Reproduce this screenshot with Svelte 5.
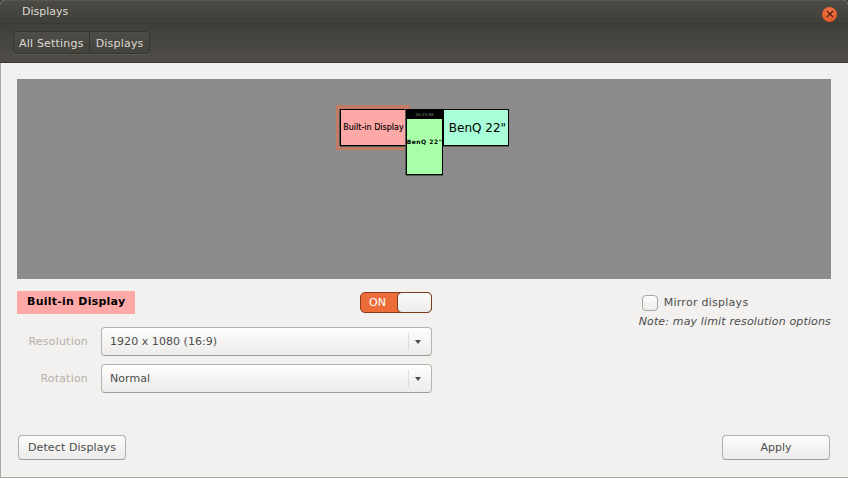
<script>
	const displays = [
		{ id: 'builtin', name: 'Built-in Display', cls: 'builtin' },
		{ id: 'phone', name: 'BenQ 22"', cls: 'portrait' },
		{ id: 'benq', name: 'BenQ 22"', cls: 'benq' }
	];
	let mirror = $state(false);
	let on = $state(true);
</script>

<div class="window">
	<header class="titlebar">
		<span class="title">Displays</span>
		<button class="close" aria-label="Close">
			<svg viewBox="0 0 8 8" width="8" height="8"><path d="M1 1l6 6M7 1l-6 6" stroke="#4a2012" stroke-width="1.3" fill="none" /></svg>
		</button>
	</header>
	<div class="toolbar">
		<div class="crumbs">
			<button>All Settings</button>
			<button>Displays</button>
		</div>
	</div>

	<main class="content">
		<section class="preview">
			<div class="selection"></div>
			{#each displays as d (d.id)}
				<div class="monitor {d.cls}">
					{#if d.cls === 'portrait'}
						<div class="panel">00:23:58</div>
					{/if}
					<span class="label">{d.name}</span>
				</div>
			{/each}
		</section>

		<section class="settings">
			<div class="left">
				<div class="head">
					<div class="badge">Built-in Display</div>
					<button class="switch" class:on onclick={() => (on = !on)}>
						<span class="on-text">ON</span>
						<span class="knob"></span>
					</button>
				</div>
				<div class="row">
					<span class="lbl">Resolution</span>
					<div class="combo"><span class="val">1920 x 1080 (16:9)</span><span class="arrow"></span></div>
				</div>
				<div class="row">
					<span class="lbl">Rotation</span>
					<div class="combo"><span class="val">Normal</span><span class="arrow"></span></div>
				</div>
			</div>
			<div class="right">
				<label class="mirror">
					<input type="checkbox" bind:checked={mirror} />
					<span>Mirror displays</span>
				</label>
				<em class="note">Note: may limit resolution options</em>
			</div>
		</section>

		<footer class="actions">
			<button class="btn detect">Detect Displays</button>
			<button class="btn apply">Apply</button>
		</footer>
	</main>
</div>

<style>
	:global(body) {
		margin: 0;
		background: #3c3b37;
	}
	button {
		font: inherit;
		padding: 0;
		cursor: default;
	}
	.window {
		width: 848px;
		height: 478px;
		box-sizing: border-box;
		display: flex;
		flex-direction: column;
		font-family: 'DejaVu Sans', sans-serif;
		font-size: 11px;
		color: #4c4c4c;
		overflow: hidden;
		background: #f2f1ef;
		border-radius: 5px 5px 0 0;
	}
	.titlebar {
		height: 24px;
		flex: none;
		display: flex;
		align-items: center;
		justify-content: space-between;
		padding: 0 11px 2px 22px;
		background: linear-gradient(#4b4a45, #3f3e39);
		border-top: 1px solid #57564f;
		border-bottom: 1px solid #393833;
		box-sizing: border-box;
		color: #dfdbd2;
	}
	.close {
		width: 15px;
		height: 15px;
		margin: 3px 0 -3px;
		border-radius: 50%;
		border: none;
		display: grid;
		place-items: center;
		background: radial-gradient(circle at 50% 35%, #f2794a, #dc4d1e);
	}
	.toolbar {
		height: 39px;
		flex: none;
		box-sizing: border-box;
		padding: 7px 0 0 13px;
		background: linear-gradient(#3f3e39, #4f4d46);
		border-bottom: 1px solid #3a3935;
	}
	.crumbs {
		display: inline-flex;
		height: 23px;
		box-sizing: border-box;
		border: 1px solid #35342f;
		border-radius: 4px;
		background: linear-gradient(#4d4c46, #44433e);
		box-shadow: 0 1px 0 #5c5a53;
		letter-spacing: 0.2px;
	}
	.crumbs button {
		background: none;
		border: none;
		color: #dfdbd2;
		padding: 1px 5px 0;
		letter-spacing: inherit;
	}
	.crumbs button + button {
		border-left: 1px solid #35342f;
		padding: 1px 5px 0 6px;
	}
	.content {
		flex: 1;
		display: flex;
		flex-direction: column;
		padding: 16px 17px 17px;
		border-left: 1px solid #a9a8a4;
		border-bottom: 1px solid #a9a8a4;
		box-sizing: border-box;
		min-height: 0;
	}
	.preview {
		position: relative;
		height: 200px;
		margin-left: -1px;
		background: #8b8b8b;
		flex: none;
	}
	.selection {
		position: absolute;
		left: 319px;
		top: 26px;
		width: 74px;
		height: 45px;
		background: #c27b66;
	}
	.monitor {
		position: absolute;
		box-sizing: border-box;
		border: 1px solid #000;
		color: #000;
		display: flex;
		align-items: center;
		justify-content: center;
		box-shadow: 0 1px 0 #4f5f4f, -1px 0 0 #4f5f4f;
	}
	.builtin {
		left: 323px;
		top: 30px;
		width: 67px;
		height: 37px;
		background: #ffa8a8;
		font-size: 8px;
		-webkit-text-stroke: 0.15px #000;
		white-space: nowrap;
	}
	.portrait {
		left: 389px;
		top: 30px;
		width: 37px;
		height: 66px;
		background: #a8ffa8;
		flex-direction: column;
		font-size: 6px;
		font-weight: bold;
		letter-spacing: 0.5px;
		white-space: nowrap;
		z-index: 1;
	}
	.portrait .panel {
		align-self: stretch;
		height: 9px;
		flex: none;
		background: #000;
		color: #888;
		font-size: 4px;
		font-weight: normal;
		letter-spacing: 0;
		line-height: 9px;
		text-align: center;
	}
	.portrait .label {
		flex: 1;
		display: flex;
		align-items: center;
		margin-bottom: 10px;
	}
	.benq {
		left: 426px;
		top: 30px;
		width: 66px;
		height: 37px;
		padding-left: 3px;
		background: #a8ffd8;
		font-size: 12px;
		white-space: nowrap;
	}
	.settings {
		display: flex;
		justify-content: space-between;
		margin: 12px 0 0 -1px;
	}
	.left {
		width: 415px;
		display: flex;
		flex-direction: column;
	}
	.head {
		display: flex;
		justify-content: space-between;
		align-items: center;
		height: 23px;
		margin-bottom: 13px;
	}
	.badge {
		background: #ffa8a8;
		color: #000;
		font-weight: bold;
		letter-spacing: 0.25px;
		width: 118px;
		height: 23px;
		line-height: 22px;
		box-sizing: border-box;
		padding-left: 10px;
	}
	.switch {
		width: 72px;
		height: 21px;
		box-sizing: border-box;
		position: relative;
		border: 1px solid #8b3a1c;
		border-radius: 5px;
		background: #ec6d3a;
		color: #fff;
		font-size: 11px;
		text-align: left;
		padding-left: 8px;
	}
	.knob {
		position: absolute;
		right: -1px;
		top: -1px;
		width: 35px;
		height: 21px;
		box-sizing: border-box;
		border: 1px solid #7a3a22;
		border-radius: 5px;
		background: linear-gradient(#fbfbfa, #ecebe9);
	}
	.row {
		display: flex;
		align-items: center;
		margin-bottom: 8px;
	}
	.lbl {
		width: 71px;
		text-align: right;
		margin-right: 13px;
		color: #b5b0a8;
		letter-spacing: 0.2px;
	}
	.combo {
		flex: 1;
		height: 29px;
		box-sizing: border-box;
		display: flex;
		align-items: center;
		justify-content: space-between;
		border: 1px solid #b4b3af;
		border-bottom-color: #9c9b97;
		border-radius: 4px;
		background: linear-gradient(#fdfdfc, #edecea);
		padding-left: 8px;
		letter-spacing: 0.05px;
	}
	.arrow {
		width: 22px;
		height: 17px;
		border-left: 1px solid #dddcda;
		position: relative;
	}
	.arrow::after {
		content: '';
		position: absolute;
		left: 6px;
		top: 7px;
		border: 3px solid transparent;
		border-top: 4px solid #4c4c4c;
		border-bottom: 0;
	}
	.right {
		display: flex;
		flex-direction: column;
		align-items: flex-end;
		padding-top: 2px;
	}
	.mirror {
		display: flex;
		align-items: center;
		gap: 6px;
		align-self: flex-start;
		margin-left: 3px;
		height: 18px;
		letter-spacing: 0.27px;
	}
	.mirror input {
		appearance: none;
		margin: 1px 0 -1px;
		width: 16px;
		height: 16px;
		box-sizing: border-box;
		border: 1px solid #a8a7a3;
		border-radius: 4px;
		background: linear-gradient(#fbfbfa, #efeeec);
	}
	.note {
		margin-top: 4px;
		white-space: nowrap;
		letter-spacing: 0.15px;
	}
	.actions {
		margin-top: auto;
		display: flex;
		justify-content: space-between;
	}
	.btn {
		height: 25px;
		box-sizing: border-box;
		border: 1px solid #b0afab;
		border-bottom-color: #9c9b97;
		border-radius: 4px;
		background: linear-gradient(#fcfcfb, #ecebe9);
		color: #4c4c4c;
	}
	.detect {
		width: 108px;
		letter-spacing: 0.1px;
	}
	.apply {
		width: 108px;
		margin-right: 1px;
	}
</style>
